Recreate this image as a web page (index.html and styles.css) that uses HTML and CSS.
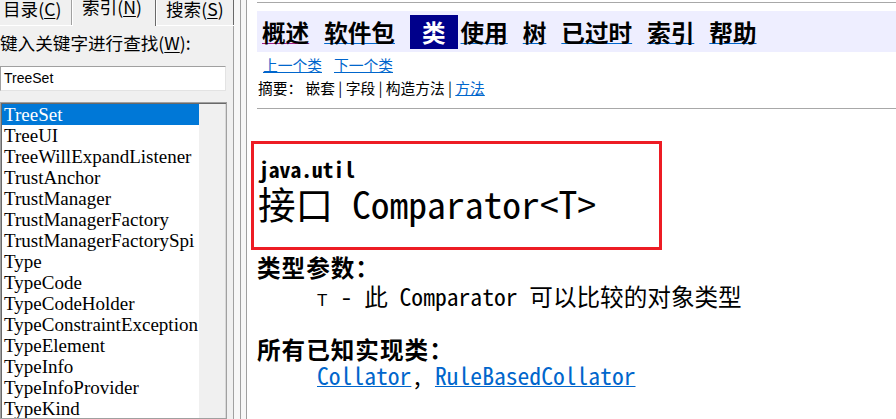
FILE: index.html
```html
<!DOCTYPE html>
<html lang="zh-CN">
<head>
<meta charset="utf-8">
<title>Comparator</title>
<link rel="stylesheet" href="styles.css">
</head>
<body>
<div class="app">
  <aside class="left">
    <div class="tabs">
      <div class="tab first">目录(<u>C</u>)</div>
      <div class="tab active">索引(<u>N</u>)</div>
      <div class="tab last">搜索(<u>S</u>)</div>
    </div>
    <div class="page">
      <div class="label">键入关键字进行查找(<u>W</u>):</div>
      <div class="input">TreeSet</div>
      <div class="listbox">
        <ul class="items">
          <li class="sel">TreeSet</li>
          <li>TreeUI</li>
          <li>TreeWillExpandListener</li>
          <li>TrustAnchor</li>
          <li>TrustManager</li>
          <li>TrustManagerFactory</li>
          <li>TrustManagerFactorySpi</li>
          <li>Type</li>
          <li>TypeCode</li>
          <li>TypeCodeHolder</li>
          <li>TypeConstraintException</li>
          <li>TypeElement</li>
          <li>TypeInfo</li>
          <li>TypeInfoProvider</li>
          <li>TypeKind</li>
          <li>TypeMirror</li>
        </ul>
        <div class="blank"></div>
      </div>
    </div>
  </aside>
  <div class="splitter"></div>
  <main class="doc">
    <div class="rule top"></div>
    <nav class="navbar">
      <a class="nav visited">概述</a>
      <a class="nav">软件包</a>
      <span class="nav-cur">类</span>
      <a class="nav">使用</a>
      <a class="nav">树</a>
      <a class="nav">已过时</a>
      <a class="nav">索引</a>
      <a class="nav">帮助</a>
    </nav>
    <div class="subnav"><a class="link">上一个类</a><a class="link">下一个类</a></div>
    <div class="summary">摘要：&nbsp;嵌套 | 字段 | 构造方法 | <a class="link">方法</a></div>
    <div class="rule mid"></div>
    <div class="header-box">
      <div class="pkg">java.util</div>
      <h2 class="title">接口 Comparator&lt;T&gt;</h2>
    </div>
    <dl class="params">
      <dt>类型参数：</dt>
      <dd><code class="tparam">T</code> - 此 Comparator 可以比较的对象类型</dd>
      <dt class="impl">所有已知实现类：</dt>
      <dd class="impls"><a class="link">Collator</a>, <a class="link">RuleBasedCollator</a></dd>
    </dl>
  </main>
</div>
</body>
</html>
```

FILE: styles.css
```css
* { box-sizing: border-box; }
html, body { margin: 0; padding: 0; }
body {
  width: 896px;
  height: 419px;
  overflow: hidden;
  background: #fff;
  font-family: "Noto Sans CJK SC", sans-serif;
  color: #000;
}
.app { display: flex; height: 419px; }

/* ---------- left pane ---------- */
.left {
  width: 234px;
  flex: none;
  background: #f0f0f0;
  display: flex;
  flex-direction: column;
  font-size: 17.6px;
}
.tabs {
  display: flex;
  align-items: flex-start;
  height: 26px;
  border-bottom: 1px solid #fff;
  flex: none;
}
.tab {
  height: 25px;
  line-height: 17px;
  white-space: nowrap;
  background: #f0f0f0;
  border-left: 1px solid #fff;
  border-right: 1px solid #a0a0a0;
}
.tab u { text-underline-offset: 2px; }
.tab.first { width: 72px; padding-left: 3px; border-left: none; }
.tab.active {
  width: 84px;
  height: 26px;
  padding-left: 9px;
  line-height: 13px;
  border-right: 1px solid #696969;
}
.tab.last { width: 78px; padding-left: 9px; border-right: 1px solid #696969; }

.page {
  flex: 1;
  display: flex;
  flex-direction: column;
  padding-top: 7px;
  border-right: 1px solid #a0a0a0;
  min-height: 0;
}
.label { line-height: 20px; white-space: nowrap; }
.label u { text-underline-offset: 2px; }
.input {
  margin-top: 13px;
  width: 226px;
  height: 25px;
  background: #fff;
  border-top: 1px solid #a0a0a0;
  border-left: 1px solid #a0a0a0;
  border-bottom: 1px solid #e3e3e3;
  border-right: 1px solid #e3e3e3;
  font-family: "Liberation Sans", sans-serif;
  font-size: 14px;
  line-height: 22px;
  padding-left: 3px;
}
.listbox {
  margin-top: 11px;
  width: 227px;
  flex: 1;
  display: flex;
  border: 1px solid #a0a0a0;
  box-shadow: inset 1px 1px 0 #696969, inset -1px 0 0 #d8d8d8;
  padding: 1px 2px 0 1px;
  overflow: hidden;
}
.items {
  list-style: none;
  margin: 0;
  padding: 0;
  width: 197px;
  flex: none;
  background: #fff;
  font-family: "Liberation Serif", serif;
  font-size: 19px;
  overflow: hidden;
}
.items li {
  height: 21px;
  line-height: 21px;
  padding-left: 2px;
  white-space: nowrap;
  overflow: hidden;
}
.items li.sel { background: #0078d7; color: #fff; }
.blank { flex: 1; background: #f0f0f0; }

/* ---------- splitter ---------- */
.splitter {
  width: 13px;
  flex: none;
  background: #f7f7f7 linear-gradient(to right, transparent 6px, #a0a0a0 6px, #a0a0a0 7px, transparent 7px);
  border-right: 1px solid #a0a0a0;
}

/* ---------- document ---------- */
.doc {
  flex: 1;
  min-width: 0;
  padding-left: 10px;
  overflow: hidden;
  background: #fff;
}
.rule { height: 1px; background: #a8a8a8; }
.rule.top { margin-top: 2px; }
.rule.mid { margin-top: 10px; }

.navbar {
  margin-top: 8px;
  height: 41px;
  background: #eeeeff;
  display: flex;
  align-items: center;
  padding-left: 5px;
  font-size: 23.6px;
  font-weight: 700;
  white-space: nowrap;
}
.nav {
  color: #000;
  text-decoration: underline;
  text-decoration-color: #0066cc;
  text-decoration-thickness: 1px;
  text-underline-offset: 1px;
  margin-right: 15px;
  line-height: 30px;
}
.nav.visited { text-decoration-color: #a0208a; }
.nav-cur {
  background: #00008b;
  color: #fff;
  height: 34px;
  line-height: 34px;
  padding: 0 12px;
  margin-right: 3px;
}

.subnav {
  margin-top: 3px;
  padding-left: 6px;
  height: 20px;
  line-height: 20px;
  font-size: 14.75px;
  display: flex;
  gap: 12px;
}
.link {
  color: #0066cc;
  text-decoration: underline;
  text-decoration-thickness: 1px;
}
.summary {
  margin-top: 3px;
  padding-left: 1px;
  height: 20px;
  line-height: 20px;
  font-size: 14.75px;
  white-space: nowrap;
}

.header-box {
  margin-top: 32px;
  margin-left: -6px;
  width: 411px;
  border: 3px solid #ed1c24;
  padding: 13px 0 24px 4px;
  font-family: "Noto Sans Mono CJK SC", "Liberation Mono", monospace;
}
.pkg {
  font-size: 21.6px;
  line-height: 24px;
  font-weight: 700;
}
.title {
  margin: 2px 0 0 0;
  font-size: 37.6px;
  line-height: 40px;
  font-weight: 400;
  white-space: nowrap;
}

.params {
  margin: 5px 0 0 0;
  font-size: 23.6px;
}
.params dt {
  font-weight: 700;
  line-height: 25px;
  letter-spacing: 1px;
}
.params dt.impl { margin-top: 24px; }
.params dd {
  margin: 4px 0 0 60px;
  line-height: 25px;
  font-family: "Noto Sans Mono CJK SC", "Liberation Mono", monospace;
  white-space: nowrap;
}
.params dd.impls { margin-top: 1px; }
.tparam {
  display: inline-block;
  width: 11.8px;
  font-family: "Liberation Sans", sans-serif;
  font-size: 17px;
}
.impls .link { text-underline-offset: 1px; }
```
